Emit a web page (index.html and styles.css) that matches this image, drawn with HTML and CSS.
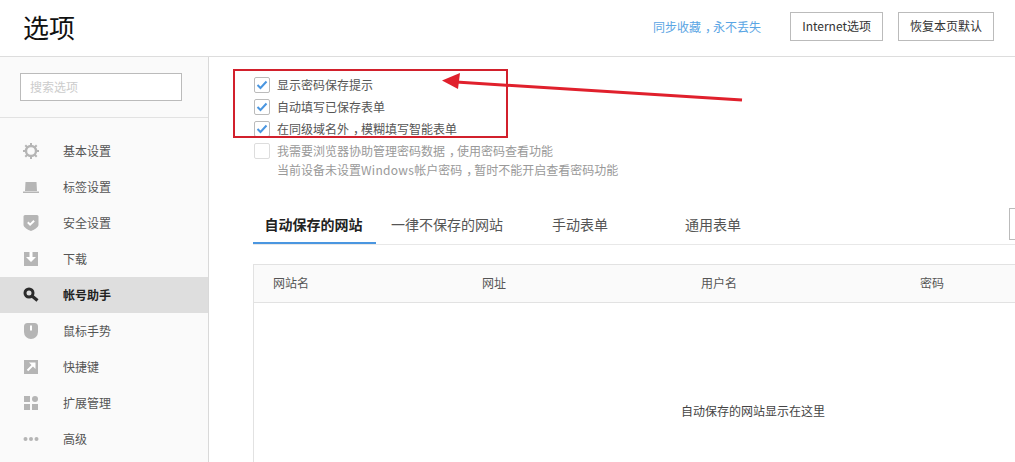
FILE: index.html
```html
<!DOCTYPE html>
<html>
<head>
  <meta charset="UTF-8" />
  <title>选项</title>
  <link rel="stylesheet" href="styles.css">
</head>
<body>

  <div class="capcalera">
    <h1>选项</h1>
    <a class="sync">同步收藏<span class="coma">，</span>永不丢失</a>
    <button class="boto boto-internet">Internet选项</button>
    <button class="boto">恢复本页默认</button>
  </div>

  <div class="cos">
    <div class="lateral">
      <div class="cerca"><input type="text" placeholder="搜索选项"></div>
      <ul class="menu">
        <li>
          <svg viewBox="0 0 16 16"><circle cx="8" cy="8" r="5" fill="none" stroke="#b5b5b5" stroke-width="2.400"/><path fill="none" stroke="#b5b5b5" stroke-width="2" d="M8 0v3M8 13v3M0 8h3M13 8h3M2.300 2.300l2.200 2.200M11.500 11.500l2.200 2.200M13.700 2.300l-2.200 2.200M4.500 11.500l-2.200 2.200"/></svg>
          基本设置
        </li>
        <li>
          <svg viewBox="0 0 16 16"><path fill="#b5b5b5" d="M2.500 3h11l.5 9H2zM0 12.500h16V14H0z"/></svg>
          标签设置
        </li>
        <li>
          <svg viewBox="0 0 16 16"><path fill="#b5b5b5" d="M2 0h12a1.500 1.500 0 0 1 1.500 1.500V10c0 2-4.500 5-7.500 6C5 15 .5 12 .5 10V1.500A1.500 1.500 0 0 1 2 0z"/><path fill="none" stroke="#fff" stroke-width="2" d="M4.800 7.300l2.300 2.300 4-3.800"/></svg>
          安全设置
        </li>
        <li>
          <svg viewBox="0 0 16 16"><path fill="#b5b5b5" d="M1 1h14v14H1z"/><path fill="#fff" d="M6.500 1h3v5H13l-5 5-5-5h3.500z"/></svg>
          下载
        </li>
        <li class="actiu">
          <svg viewBox="0 0 16 16"><circle cx="6" cy="6" r="4" fill="none" stroke="#2b2b2b" stroke-width="3"/><path fill="none" stroke="#2b2b2b" stroke-width="3.200" d="M9 9l5.500 4.500"/></svg>
          帐号助手
        </li>
        <li>
          <svg viewBox="0 0 16 16"><path fill="#b5b5b5" d="M4.500 0h7A3.500 3.500 0 0 1 15 3.500V9A7 7 0 0 1 1 9V3.500A3.500 3.500 0 0 1 4.500 0z"/><path fill="#fff" d="M7 2.500h2v5H7z"/></svg>
          鼠标手势
        </li>
        <li>
          <svg viewBox="0 0 16 16"><path fill="#b5b5b5" d="M1 1h14v14H1z"/><path fill="none" stroke="#fff" stroke-width="2" d="M4.500 11.500L11 5"/><path fill="#fff" d="M6 3.500h6.500V10z"/></svg>
          快捷键
        </li>
        <li>
          <svg viewBox="0 0 16 16"><path fill="#b5b5b5" d="M1 1h6v6H1zM1 9h6v6H1zM9 9h6v6H9z"/><circle cx="12" cy="4" r="3" fill="#b5b5b5"/></svg>
          扩展管理
        </li>
        <li>
          <svg viewBox="0 0 16 16"><g fill="#b5b5b5"><circle cx="2.500" cy="8" r="2"/><circle cx="8" cy="8" r="2"/><circle cx="13.500" cy="8" r="2"/></g></svg>
          高级
        </li>
      </ul>
    </div>

    <div class="contingut">
      <div class="opcions">
        <label class="opcio"><span class="casella"><svg viewBox="0 0 14 14"><path fill="none" stroke="#4a96e0" stroke-width="2" d="M2.500 7l3 3 6-6.500"/></svg></span>显示密码保存提示</label>
        <label class="opcio"><span class="casella"><svg viewBox="0 0 14 14"><path fill="none" stroke="#4a96e0" stroke-width="2" d="M2.500 7l3 3 6-6.500"/></svg></span>自动填写已保存表单</label>
        <label class="opcio"><span class="casella"><svg viewBox="0 0 14 14"><path fill="none" stroke="#4a96e0" stroke-width="2" d="M2.500 7l3 3 6-6.500"/></svg></span><span>在同级域名外<span class="coma">，</span>模糊填写智能表单</span></label>
        <label class="opcio desactivada"><span class="casella"></span><span>我需要浏览器协助管理密码数据<span class="coma">，</span>使用密码查看功能</span></label>
        <div class="avis">当前设备未设置<span class="win">Windows</span>帐户密码<span class="coma">，</span>暂时不能开启查看密码功能</div>
      </div>

      <div class="pestanyes">
        <div class="pestanya activa">自动保存的网站</div>
        <div class="pestanya">一律不保存的网站</div>
        <div class="pestanya">手动表单</div>
        <div class="pestanya">通用表单</div>
        <div class="caixa-dreta"></div>
      </div>

      <div class="taula">
        <div class="fila-cap">
          <div>网站名</div>
          <div>网址</div>
          <div>用户名</div>
          <div>密码</div>
        </div>
        <div class="buit">自动保存的网站显示在这里</div>
      </div>
    </div>
  </div>

  <!-- marca vermella afegida sobre la captura -->
  <svg class="marca" viewBox="0 0 1015 462">
    <rect x="234" y="70" width="273" height="67" fill="none" stroke="#d2202c" stroke-width="2"/>
    <path fill="none" stroke="#e0202c" stroke-width="3" d="M742 100L456 82"/>
    <path fill="#e0202c" d="M442 80.500L460 73l-2 16z"/>
  </svg>

</body>
</html>
```

FILE: styles.css
```css
* {
  box-sizing: border-box;
}
html, body {
  height: 100%;
}
body {
  margin: 0;
  height: 462px;
  overflow: hidden;
  font-family: "Noto Sans CJK SC", "Noto Sans", sans-serif;
  font-size: 12px;
  color: #555;
  background-color: #fff;
}
.capcalera {
  display: flex;
  align-items: center;
  height: 57px;
  padding: 0 21px 3px 23px;
  border-bottom: 1px solid #ddd;
}
.capcalera h1 {
  margin: 0 auto 0 0;
  font-size: 26px;
  font-weight: normal;
  line-height: 36px;
  color: #111;
}
.sync {
  margin-right: 29px;
  color: #5aa5e4;
}
.coma {
  margin-left: 4px;
  letter-spacing: -4px;
}
.win {
  letter-spacing: 0.3px;
}
.boto {
  height: 29px;
  padding: 0 11px 2px;
  border: 1px solid #bbb;
  background-color: #fff;
  font-family: inherit;
  font-size: 12px;
  color: #333;
}
.boto-internet {
  margin-right: 15px;
}
.cos {
  display: flex;
  height: 405px;
}
.lateral {
  flex: none;
  width: 209px;
  background-color: #fafafa;
  border-right: 1px solid #d9d9d9;
}
.cerca {
  padding: 16px 26px 16px 20px;
  border-bottom: 1px solid #e2e2e2;
}
.cerca input {
  display: block;
  width: 162px;
  height: 28px;
  padding: 0 9px 2px;
  border: 1px solid #bbb;
  background-color: #fff;
  font-family: inherit;
  font-size: 12px;
  outline: none;
}
.cerca input::placeholder {
  color: #ccc;
}
.menu {
  list-style: none;
  margin: 0;
  padding: 15px 0 0;
}
.menu li {
  display: flex;
  align-items: center;
  gap: 24px;
  height: 36px;
  padding: 0 0 2px 23px;
  color: #555;
}
.menu li svg {
  flex: none;
  width: 16px;
  height: 16px;
  margin-top: 2px;
}
.menu li.actiu {
  background-color: #dedede;
  font-weight: bold;
  color: #222;
}
.contingut {
  flex: 1;
  min-width: 0;
  overflow: hidden;
  padding: 17px 0 0 44px;
}
.opcions {
  height: 134px;
}
.opcio {
  display: flex;
  align-items: center;
  height: 22px;
  padding: 0 0 2px 1px;
}
.casella {
  flex: none;
  display: flex;
  align-items: center;
  justify-content: center;
  width: 16px;
  height: 16px;
  margin: 2px 7px 0 0;
  border: 1px solid #bbb;
  border-radius: 2px;
  background-color: #fff;
}
.casella svg {
  width: 14px;
  height: 14px;
}
.desactivada {
  color: #999;
}
.desactivada .casella {
  border-color: #ddd;
}
.avis {
  margin-top: -1px;
  padding-left: 24px;
  line-height: 18px;
  color: #999;
}
.pestanyes {
  display: flex;
  width: 1000px;
  height: 37px;
  border-bottom: 1px solid #e8e8e8;
}
.pestanya {
  height: 36px;
  font-size: 14px;
  line-height: 33px;
  text-align: center;
  color: #555;
}
.pestanya:nth-child(2) {
  width: 142px;
}
.pestanya:nth-child(3) {
  width: 124px;
}
.pestanya:nth-child(4) {
  width: 142px;
}
.pestanya.activa {
  width: 123px;
  padding-right: 2px;
  border-bottom: 2px solid #4a96e0;
  font-weight: bold;
  color: #222;
}
.caixa-dreta {
  width: 244px;
  height: 32px;
  margin-left: auto;
  border: 1px solid #bbb;
}
.taula {
  width: 1000px;
  margin-top: 19px;
  border: 1px solid #e2e2e2;
}
.fila-cap {
  display: grid;
  grid-template-columns: 209px 219px 219px 1fr;
  align-items: center;
  height: 38px;
  padding: 0 0 2px 19px;
  background-color: #fafafa;
  border-bottom: 1px solid #e2e2e2;
}
.buit {
  display: flex;
  align-items: center;
  justify-content: center;
  height: 215px;
  color: #444;
}
.marca {
  position: absolute;
  left: 0;
  top: 0;
  width: 1015px;
  height: 462px;
  pointer-events: none;
}
```
